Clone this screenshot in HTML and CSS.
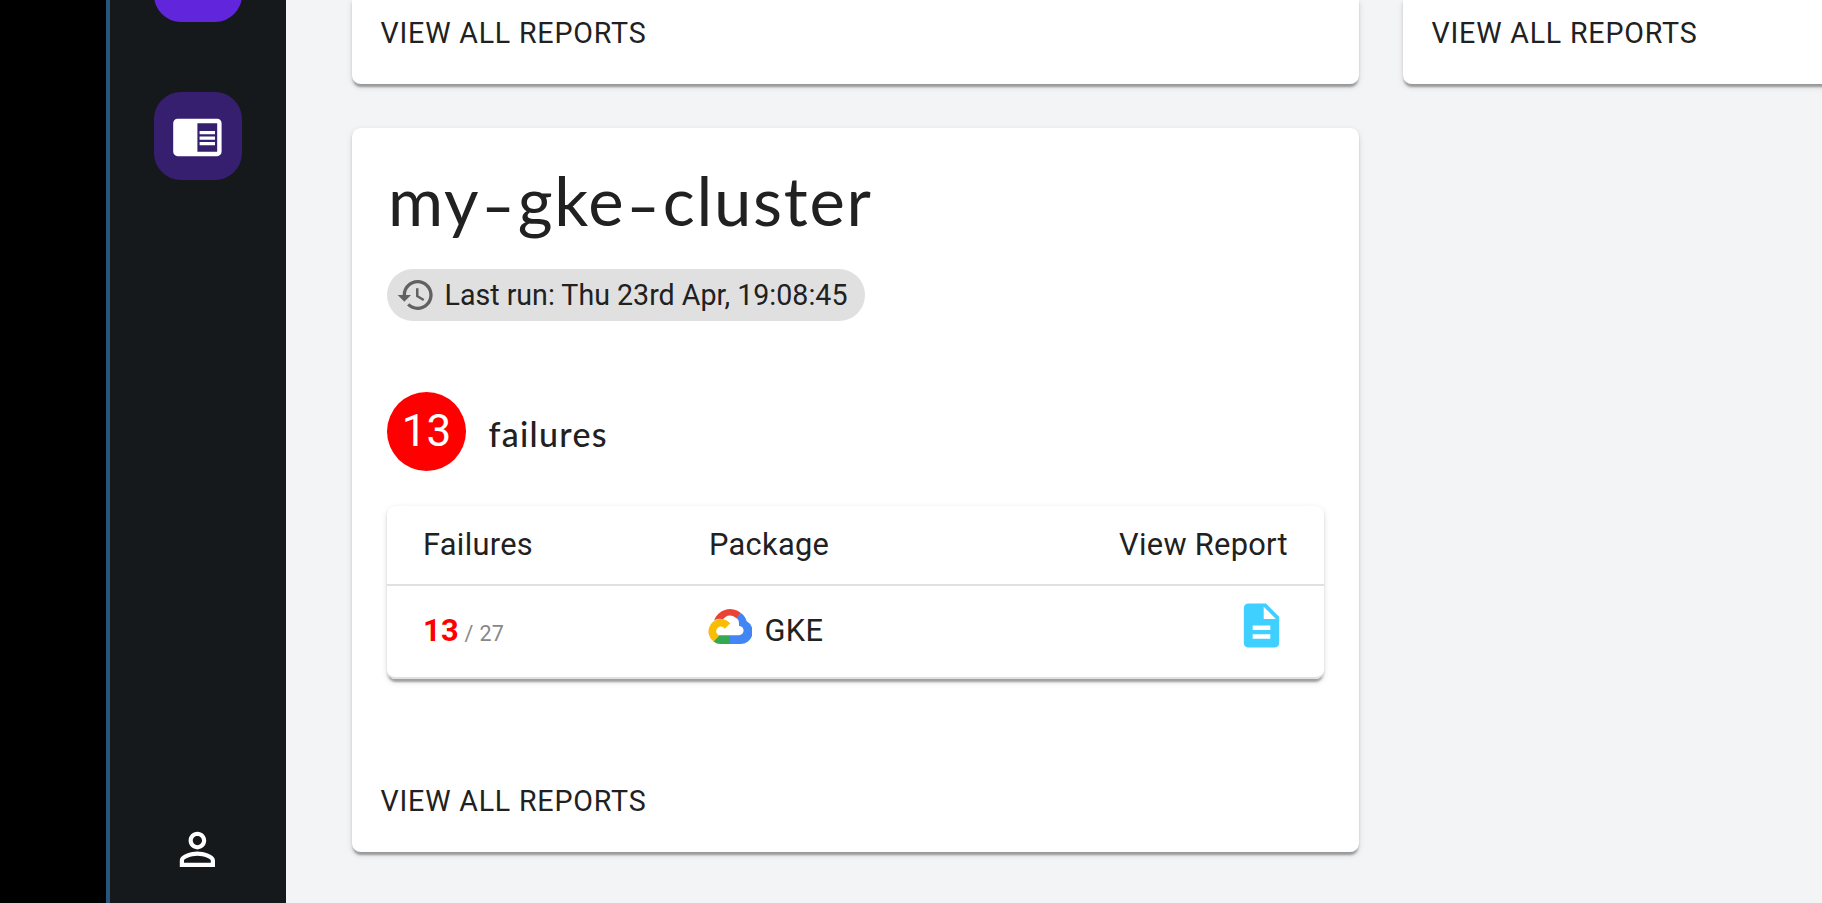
FILE: index.html
```html
<!DOCTYPE html>
<html lang="en">
<head>
<meta charset="utf-8">
<title>Cluster reports</title>
<link rel="stylesheet" href="styles.css">
</head>
<body>
<div class="app">
  <nav class="sidebar">
    <div class="nav-top">
      <a class="nav-btn nav-btn-primary"></a>
      <a class="nav-btn">
        <svg class="nav-icon" viewBox="0 0 24 24"><path d="M13 12h7v1.5h-7zm0-2.5h7V11h-7zm0 5h7V16h-7zM21 4H3c-1.1 0-2 .9-2 2v13c0 1.1.9 2 2 2h18c1.1 0 2-.9 2-2V6c0-1.1-.9-2-2-2zm0 15h-9V6h9v13z"/></svg>
      </a>
    </div>
    <svg class="nav-icon" viewBox="0 0 24 24"><path d="M12 5.900c1.160 0 2.100.940 2.100 2.100s-.940 2.100-2.100 2.100S9.900 9.160 9.900 8s.940-2.100 2.100-2.100m0 9c2.970 0 6.100 1.460 6.100 2.100v1.100H5.900V17c0-.640 3.130-2.100 6.100-2.100M12 4C9.790 4 8 5.790 8 8s1.790 4 4 4 4-1.790 4-4-1.790-4-4-4zm0 9c-2.670 0-8 1.340-8 4v3h16v-3c0-2.660-5.330-4-8-4z"/></svg>
  </nav>
  <main class="content">
    <section class="card card-cut"><a class="view-all">VIEW ALL REPORTS</a></section>
    <section class="card card-cut"><a class="view-all">VIEW ALL REPORTS</a></section>
    <section class="card cluster">
      <h2 class="title">my<span class="dash">-</span>gke<span class="dash">-</span>cluster</h2>
      <div class="chip">
        <svg class="chip-icon" viewBox="0 0 24 24"><path d="M13 3c-4.970 0-9 4.030-9 9H1l3.890 3.890.070.140L9 12H6c0-3.870 3.130-7 7-7s7 3.130 7 7-3.130 7-7 7c-1.930 0-3.680-.790-4.940-2.060l-1.420 1.420C8.270 19.990 10.510 21 13 21c4.970 0 9-4.030 9-9s-4.030-9-9-9zm-1 5v5l4.280 2.540.720-1.210-3.500-2.080V8H12z"/></svg>
        <span>Last run: Thu 23rd Apr, 19:08:45</span>
      </div>
      <div class="summary">
        <span class="avatar">13</span>
        <span class="summary-label">failures</span>
      </div>
      <div class="table">
        <div class="row head"><span>Failures</span><span>Package</span><span class="end">View Report</span></div>
        <div class="row body">
          <span><b class="failed">13</b><small class="total"> / 27</small></span>
          <span class="package">
            <svg class="cloud" viewBox="0 0 44 36">
              <path fill="#ea4335" d="M28.500 10.500l4.500-5.500A17 17 0 0 0 6 12.500q4-2.500 9-1.200A8.500 8.500 0 0 1 28.500 10.500z"/>
              <path fill="#4285f4" d="M33 5L28.500 9.500Q31.500 12.500 31 18a4.600 4.600 0 0 1 0 9.200H22V36H32.500A12.300 12.300 0 0 0 38.500 13Q37.500 8.500 33 5z"/>
              <path fill="#34a853" d="M11.500 27.200H22V36H12.500Q8.500 36 5.500 33.500L10 27z"/>
              <path fill="#fbbc05" d="M12.500 11A12.500 12.500 0 0 0 5.500 33.500L11.500 27.500A4.600 4.600 0 1 1 16.800 20.800L22.300 15.300Q18 11 12.500 11z"/>
            </svg>
            GKE
          </span>
          <span class="end"><svg class="doc" viewBox="0 0 24 24"><path d="M14 2H6c-1.100 0-1.990.900-1.990 2L4 20c0 1.100.890 2 1.990 2H18c1.100 0 2-.900 2-2V8l-6-6zm2 16H8v-2h8v2zm0-4H8v-2h8v2zm-3-5V3.500L18.500 9H13z"/></svg></span>
        </div>
      </div>
      <a class="view-all">VIEW ALL REPORTS</a>
    </section>
  </main>
</div>
</body>
</html>
```
FILE: styles.css
```css
* { box-sizing: border-box; }
body {
  margin: 0;
  height: 903px;
  overflow: hidden;
  background: #000;
  color: #212121;
  font-family: Roboto, "Liberation Sans", sans-serif;
}
.app { display: flex; height: 903px; padding-left: 106px; }
.sidebar {
  flex: none;
  width: 180px;
  padding-bottom: 27px;
  border-left: 4px solid #28557c;
  background: #16191c;
  display: flex;
  flex-direction: column;
  align-items: center;
  justify-content: space-between;
}
.nav-top { display: flex; flex-direction: column; gap: 70px; margin-top: -66px; }
.nav-btn {
  display: flex;
  align-items: center;
  justify-content: center;
  width: 88px;
  height: 88px;
  border-radius: 27px;
  background: #371f70;
}
.nav-btn-primary { background: #6126dc; }
.nav-icon { display: block; width: 52.8px; height: 52.8px; margin-right: 1px; fill: #fff; }
.content {
  flex: 1;
  min-width: 0;
  overflow: hidden;
  padding-left: 66px;
  background: #f3f4f6;
  display: grid;
  grid-template-columns: 1007px 1007px;
  grid-template-rows: 84px 724px;
  gap: 44px;
}
.card {
  background: #fff;
  border-radius: 8.8px;
  box-shadow: 0 4.4px 2.2px -2.2px rgba(0,0,0,.2), 0 2.2px 2.2px rgba(0,0,0,.14), 0 2.2px 6.6px rgba(0,0,0,.12);
}
.card-cut { border-radius: 0 0 8.8px 8.8px; padding: 17px 28.5px 34px; }
.view-all { display: block; font-size: 28.6px; line-height: 33px; letter-spacing: .8px; }
.cluster { padding: 32px 35px 34px; }
.cluster .view-all { margin: 106px 0 0 -6.5px; }
.title {
  margin: 0 0 0 1px;
  font: 400 67px/80px Lato, sans-serif;
  letter-spacing: 1.700px;
}
/* longer, lower hyphen than the typeface's own */
.dash {
  display: inline-block;
  margin: 0 5.500px;
  transform: translateY(5px) scale(1.350, .9);
}
.chip {
  display: flex;
  align-items: center;
  gap: 8.5px;
  width: 478px;
  height: 52px;
  margin-top: 29px;
  padding-left: 9px;
  border-radius: 26px;
  background: #e0e0e0;
  font-size: 28.6px;
  white-space: nowrap;
}
.chip-icon { flex: none; width: 40px; height: 40px; fill: #616161; }
.summary { display: flex; align-items: center; gap: 22.5px; margin-top: 71px; }
.avatar {
  width: 79px;
  height: 79px;
  border-radius: 50%;
  background: #f00;
  color: #fff;
  font-size: 44px;
  line-height: 79px;
  text-align: center;
}
.summary-label { padding-top: 4px; font: 500 34px/40px Lato, sans-serif; letter-spacing: 1.3px; }
.table {
  margin-top: 35px;
  border-radius: 8.8px;
  box-shadow: 0 4.4px 2.2px -2.2px rgba(0,0,0,.2), 0 2.2px 2.2px rgba(0,0,0,.14), 0 2.2px 6.6px rgba(0,0,0,.12);
  font-size: 30.8px;
  letter-spacing: .3px;
}
.row {
  display: grid;
  grid-template-columns: 286px 1fr 1fr;
  align-items: center;
  border-bottom: 2px solid #e0e0e0;
}
.row > span { padding: 0 36px; }
.head { height: 80px; padding-bottom: 2px; }
.body { height: 93px; padding-bottom: 3px; border-radius: 0 0 8.8px 8.8px; }
.end { text-align: right; }
.failed { color: #f00; }
.total { font-size: 21.5px; color: #888; white-space: pre; }
.package { display: flex; align-items: center; gap: 12.5px; }
.cloud { width: 44px; height: 36px; margin: -9px 0 0 -1px; }
.doc { display: inline-block; width: 53px; height: 53px; margin-top: -9px; fill: #40d0ff; vertical-align: middle; }
```
